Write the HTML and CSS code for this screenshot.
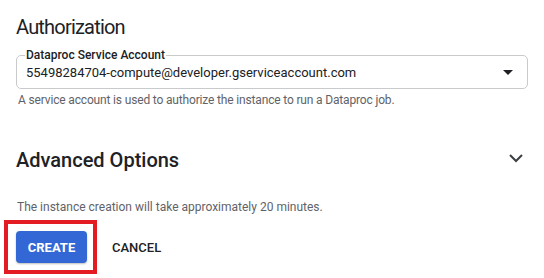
FILE: index.html
```html
<!DOCTYPE html>
<html lang="en">
<head>
  <meta charset="UTF-8" />
  <title>Create Instance</title>
  <link rel="stylesheet" href="styles.css">
</head>
<body>
  <div class="panel">
    <h2 class="section-title">Authorization</h2>

    <fieldset class="select-field">
      <legend>Dataproc Service Account</legend>
      <div class="select-value">
        <span>55498284704-compute@developer.gserviceaccount.com</span>
        <svg class="select-arrow" width="10" height="5" viewBox="0 0 10 5"><path d="M0 0h10L5 5z" fill="#202124"/></svg>
      </div>
    </fieldset>
    <p class="hint">A service account is used to authorize the instance to run a Dataproc job.</p>

    <div class="expander">
      <h2 class="section-title strong">Advanced Options</h2>
      <svg class="chevron" width="14" height="9" viewBox="0 0 14 9"><path d="M1 1l6 6 6-6" fill="none" stroke="#3c4043" stroke-width="2"/></svg>
    </div>

    <p class="note">The instance creation will take approximately 20 minutes.</p>

    <div class="actions">
      <div class="highlight">
        <button class="btn-primary">CREATE</button>
      </div>
      <button class="btn-text">CANCEL</button>
    </div>
  </div>
</body>
</html>
```

FILE: styles.css
```css
* {
  box-sizing: border-box;
}

body {
  margin: 0;
  background: #fff;
  font-family: Roboto, 'Liberation Sans', Arial, sans-serif;
  color: #202124;
}

.panel {
  padding: 14px 16px 0 16px;
}

.section-title {
  margin: 0;
  font-size: 20px;
  font-weight: 400;
  line-height: 26px;
  letter-spacing: -0.8px;
}

.section-title.strong {
  font-weight: 500;
  letter-spacing: 0;
}

.select-field {
  margin: 9px 0 0 0;
  padding: 0 10px 0 8px;
  height: 40px;
  border: 1px solid #c9cacc;
  border-radius: 5px;
}

.select-field legend {
  padding: 0 1px;
  font-size: 12px;
  font-weight: 500;
  line-height: 12px;
}

.select-value {
  display: flex;
  align-items: center;
  justify-content: space-between;
  height: 22px;
  padding-left: 1px;
  font-size: 13px;
}

.select-arrow {
  margin-right: 4px;
}

.hint {
  margin: 3px 0 0 2px;
  font-size: 12px;
  line-height: 16px;
  letter-spacing: -0.16px;
  color: #5f6368;
}

.expander {
  display: flex;
  align-items: center;
  justify-content: space-between;
  margin-top: 39px;
  padding-right: 5px;
}

.chevron {
  margin-top: -3px;
}

.note {
  margin: 26px 0 0 1px;
  font-size: 12px;
  line-height: 16px;
  color: #5f6368;
}

.actions {
  display: flex;
  align-items: center;
  margin: 5px 0 0 -12px;
}

.highlight {
  border: 4px solid #e31b23;
  padding: 7px 6px 7px 8px;
}

button {
  font-family: Roboto, 'Liberation Sans', Arial, sans-serif;
  font-size: 13px;
  font-weight: 700;
  cursor: pointer;
}

.btn-primary {
  display: block;
  width: 71px;
  height: 32px;
  border: none;
  border-radius: 4px;
  background: #3367d6;
  color: #fff;
  box-shadow: 0 1px 2px rgba(60, 64, 67, 0.35);
}

.btn-text {
  margin-left: 15px;
  padding: 0;
  border: none;
  background: none;
  color: #202124;
  font-weight: 500;
}
```
